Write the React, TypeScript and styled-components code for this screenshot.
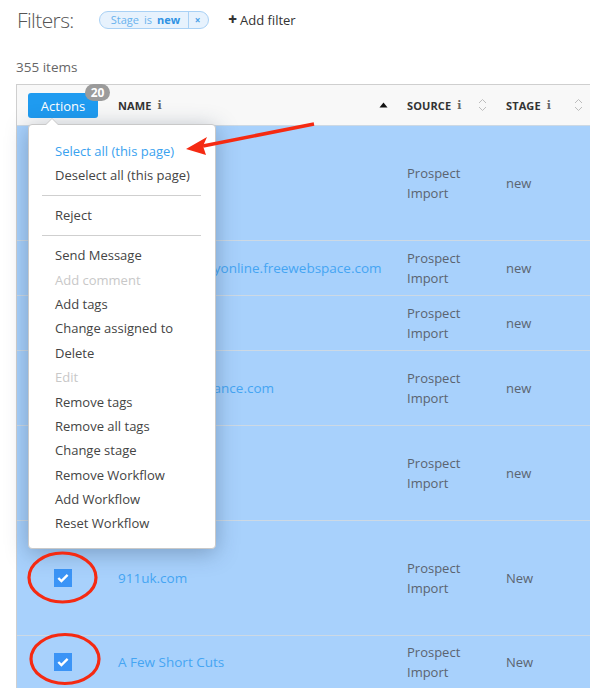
import React from "react";
import styled, { createGlobalStyle } from "styled-components";

const Global = createGlobalStyle`
  html, body { margin: 0; padding: 0; background: #fff; }
  body { font-family: "Open Sans", "Liberation Sans", sans-serif; overflow: hidden; }
  * { box-sizing: border-box; }
`;

const Page = styled.div`
  position: relative;
  width: 590px;
  height: 689px;
  overflow: hidden;
  padding-left: 16px;
`;

const FilterBar = styled.div`
  height: 40px;
  display: flex;
  align-items: center;
`;

const FiltersLabel = styled.div`
  font-size: 21px;
  font-weight: 300;
  color: #555;
  margin-left: 1px;
  margin-right: 25px;
  letter-spacing: -0.6px;
`;

const Pill = styled.div`
  display: flex;
  align-items: center;
  height: 18px;
  border: 1px solid #a9d1f5;
  background: #e7f2fd;
  border-radius: 9px;
  font-size: 11px;
  color: #6ab3ee;
  margin-top: -1px;
`;

const PillText = styled.span`
  padding: 0 8px 0 11px;
  display: flex;
  gap: 5px;
  line-height: 16px;
`;

const PillStrong = styled.span`
  font-weight: 700;
  color: #2f92e4;
`;

const PillClose = styled.span`
  border-left: 1px solid #a9d1f5;
  height: 100%;
  width: 20px;
  display: flex;
  align-items: center;
  justify-content: center;
  font-size: 10px;
  font-weight: 700;
  color: #4aa0e8;
  padding-right: 2px;
`;

const AddFilter = styled.div`
  margin-left: 19px;
  font-size: 13px;
  color: #333;
  display: flex;
  align-items: center;
  gap: 3px;
`;

const Plus = styled.span`
  font-weight: 800;
  font-size: 15px;
  line-height: 1;
  margin-top: -1px;
`;

const Count = styled.div`
  margin-top: 17px;
  line-height: 20px;
  font-size: 13.5px;
  color: #666;
`;

const TableWrap = styled.div`
  position: relative;
  margin-top: 7px;
  width: 574px;
  border-top: 1px solid #cfcfcf;
  border-left: 1px solid #cfcfcf;
`;

const cols = "89px 289px 99px 1fr";

const HeaderRow = styled.div`
  display: grid;
  grid-template-columns: ${cols};
  height: 40px;
  background: #f8f8f8;
  align-items: center;
`;

const HeadCell = styled.div<{ $pl?: number }>`
  display: flex;
  align-items: center;
  height: 100%;
  padding-left: ${(p) => p.$pl ?? 12}px;
  padding-right: 7px;
  font-size: 11px;
  font-weight: 700;
  color: #333;
  letter-spacing: 0.1px;
`;

const HeadLabel = styled.span`
  margin-right: 6px;
`;

const Info = styled.span`
  font-family: "DejaVu Serif", serif;
  font-weight: 700;
  font-size: 11px;
  color: #666;
`;

const Spacer = styled.span`
  flex: 1;
`;

const ActionsBtn = styled.div`
  position: relative;
  width: 70px;
  height: 25px;
  background: #1f9bf0;
  border-radius: 3px;
  color: #fff;
  font-size: 13px;
  font-weight: 400;
  letter-spacing: 0;
  display: flex;
  align-items: center;
  justify-content: center;
  margin-top: 1px;
`;

const Badge = styled.div`
  position: absolute;
  right: -12px;
  top: -9px;
  width: 25px;
  height: 17px;
  border-radius: 9px;
  background: #9b9b9b;
  color: #fff;
  font-size: 12px;
  font-weight: 700;
  display: flex;
  align-items: center;
  justify-content: center;
`;

const Row = styled.div<{ $h: number }>`
  display: grid;
  grid-template-columns: ${cols};
  height: ${(p) => p.$h}px;
  background: #a8d1fc;
  border-top: 1px solid #cdd9e4;
  align-items: center;
  font-size: 13px;
  color: #5b6470;
`;

const Cell = styled.div`
  padding-left: 12px;
  line-height: 20px;
`;

const CheckCell = styled.div`
  display: flex;
  justify-content: center;
  padding-left: 2px;
`;

const Check = styled.div`
  width: 18px;
  height: 18px;
  background: #3b94f6;
  display: flex;
  align-items: center;
  justify-content: center;
`;

const NameLink = styled.div`
  padding-left: 12px;
  color: #45a5f3;
  font-size: 13.5px;
  white-space: nowrap;
`;

const Menu = styled.div`
  position: absolute;
  left: 11px;
  top: 39px;
  width: 188px;
  height: 425px;
  background: #fff;
  border: 1px solid #c9c9c9;
  border-radius: 4px;
  box-shadow: 0 4px 22px rgba(40, 60, 90, 0.35);
  padding: 14px 0 14px 0;
  z-index: 5;
  &::before {
    content: "";
    position: absolute;
    left: 16px;
    top: -7px;
    border-left: 7px solid transparent;
    border-right: 7px solid transparent;
    border-bottom: 7px solid #c9c9c9;
  }
  &::after {
    content: "";
    position: absolute;
    left: 17px;
    top: -6px;
    border-left: 6px solid transparent;
    border-right: 6px solid transparent;
    border-bottom: 6px solid #fff;
  }
`;

const MenuItem = styled.div<{ $tone?: "active" | "disabled" }>`
  height: 24.4px;
  line-height: 24.4px;
  padding-left: 26px;
  font-size: 13px;
  color: ${(p) =>
    p.$tone === "active" ? "#3aa2ef" : p.$tone === "disabled" ? "#c8c8c8" : "#444"};
`;

const Divider = styled.div`
  height: 1px;
  background: #cfcfcf;
  margin: 7px 14px 7.5px 13px;
`;

const Overlay = styled.svg`
  position: absolute;
  left: 0;
  top: 0;
  pointer-events: none;
  z-index: 10;
`;

const SortUpDown = () => (
  <svg width="9" height="14" viewBox="0 0 9 14">
    <path d="M1 5 L4.5 1.5 L8 5" fill="none" stroke="#bdbdbd" strokeWidth="1" />
    <path d="M1 9 L4.5 12.5 L8 9" fill="none" stroke="#bdbdbd" strokeWidth="1" />
  </svg>
);

const SortUp = () => (
  <svg width="9" height="6" viewBox="0 0 9 6">
    <path d="M0.5 5.5 L4.5 0.5 L8.5 5.5 Z" fill="#111" />
  </svg>
);

const CheckMark = () => (
  <svg width="12" height="10" viewBox="0 0 12 10">
    <path d="M1.3 5 L4.4 8 L10.6 1.8" fill="none" stroke="#fff" strokeWidth="2.4" />
  </svg>
);

type RowData = { h: number; name: string; stage: string };

const rows: RowData[] = [
  { h: 115, name: "", stage: "new" },
  { h: 55, name: "www.shopsbuyyonline.freewebspace.com", stage: "new" },
  { h: 55, name: "", stage: "new" },
  { h: 75, name: "www.autoinsurance.com", stage: "new" },
  { h: 95, name: "", stage: "new" },
  { h: 115, name: "911uk.com", stage: "New" },
  { h: 53, name: "A Few Short Cuts", stage: "New" },
];

type Item = { label: string; tone?: "active" | "disabled" } | "divider";

const items: Item[] = [
  { label: "Select all (this page)", tone: "active" },
  { label: "Deselect all (this page)" },
  "divider",
  { label: "Reject" },
  "divider",
  { label: "Send Message" },
  { label: "Add comment", tone: "disabled" },
  { label: "Add tags" },
  { label: "Change assigned to" },
  { label: "Delete" },
  { label: "Edit", tone: "disabled" },
  { label: "Remove tags" },
  { label: "Remove all tags" },
  { label: "Change stage" },
  { label: "Remove Workflow" },
  { label: "Add Workflow" },
  { label: "Reset Workflow" },
];

export default function App() {
  return (
    <>
      <Global />
      <Page>
        <FilterBar>
          <FiltersLabel>Filters:</FiltersLabel>
          <Pill>
            <PillText>
              <span>Stage</span>
              <span>is</span>
              <PillStrong>new</PillStrong>
            </PillText>
            <PillClose>×</PillClose>
          </Pill>
          <AddFilter>
            <Plus>+</Plus>
            <span>Add filter</span>
          </AddFilter>
        </FilterBar>
        <Count>355 items</Count>
        <TableWrap>
          <HeaderRow>
            <HeadCell $pl={11}>
              <ActionsBtn>
                Actions
                <Badge>20</Badge>
              </ActionsBtn>
            </HeadCell>
            <HeadCell>
              <HeadLabel>NAME</HeadLabel>
              <Info>i</Info>
              <Spacer />
              <SortUp />
            </HeadCell>
            <HeadCell>
              <HeadLabel>SOURCE</HeadLabel>
              <Info>i</Info>
              <Spacer />
              <SortUpDown />
            </HeadCell>
            <HeadCell>
              <HeadLabel>STAGE</HeadLabel>
              <Info>i</Info>
              <Spacer />
              <SortUpDown />
            </HeadCell>
          </HeaderRow>
          {rows.map((r, i) => (
            <Row key={i} $h={r.h}>
              <CheckCell>
                <Check>
                  <CheckMark />
                </Check>
              </CheckCell>
              <NameLink>{r.name}</NameLink>
              <Cell>
                Prospect
                <br />
                Import
              </Cell>
              <Cell>{r.stage}</Cell>
            </Row>
          ))}
          <Menu>
            {items.map((it, i) =>
              it === "divider" ? (
                <Divider key={i} />
              ) : (
                <MenuItem key={i} $tone={it.tone}>
                  {it.label}
                </MenuItem>
              )
            )}
          </Menu>
        </TableWrap>
        <Overlay width="590" height="689" viewBox="0 0 590 689">
          <line x1="314" y1="124" x2="203" y2="146" stroke="#f52a12" strokeWidth="3.5" />
          <path d="M186 149 L207 137 L203 146 L206 155 Z" fill="#f52a12" />
          <ellipse cx="62.5" cy="577.5" rx="33.5" ry="24.5" fill="none" stroke="#f52a12" strokeWidth="3.2" />
          <ellipse cx="65" cy="659" rx="34" ry="24.5" fill="none" stroke="#f52a12" strokeWidth="3.2" />
        </Overlay>
      </Page>
    </>
  );
}
